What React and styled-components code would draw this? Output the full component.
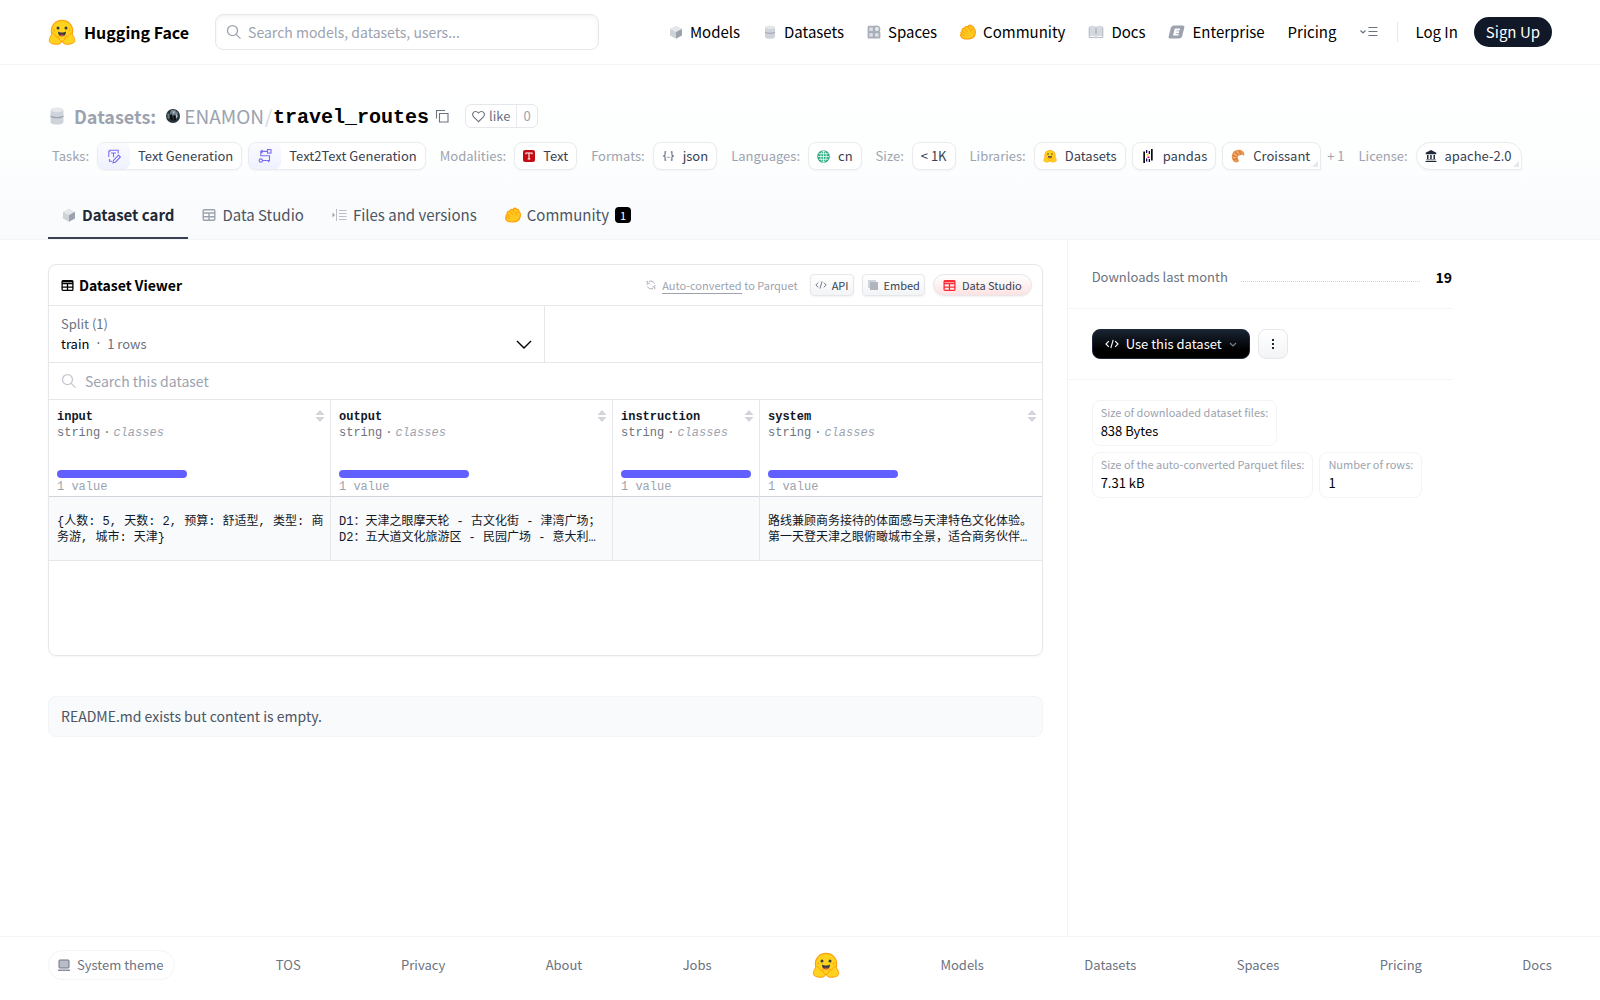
import React from 'react';
import styled, { createGlobalStyle } from 'styled-components';

const GlobalStyle = createGlobalStyle`
  * {
    box-sizing: border-box;
  }

  body {
    margin: 0;
    background: #fff;
    color: #000;
    font-family: 'Noto Sans CJK SC', 'Noto Sans', sans-serif;
    font-size: 14px;
    line-height: 24px;
  }

  button,
  input {
    margin: 0;
    font-family: inherit;
    cursor: pointer;
  }

  a {
    color: inherit;
    text-decoration: none;
  }

  svg {
    display: block;
    flex-shrink: 0;
  }

  h1,
  h2,
  p,
  dl,
  dd {
    margin: 0;
    padding: 0;
  }
`;

const Page = styled.div`
  display: flex;
  flex-direction: column;
  min-height: 100vh;
`;

const Header = styled.header`
  display: flex;
  align-items: center;
  height: 65px;
  padding: 0 48px;
  border-bottom: 1px solid #f3f4f6;
`;

const Brand = styled.a`
  display: flex;
  align-items: center;
  gap: 8px;
  margin-right: 26px;
  font-size: 16px;
  font-weight: 700;
  white-space: nowrap;
`;

const HeaderSearch = styled.label`
  display: flex;
  align-items: center;
  flex: 0 1 384px;
  height: 36px;
  padding: 0 10px;
  gap: 6px;
  border: 1px solid #e5e7eb;
  border-radius: 8px;
  color: #9ca3af;
  box-shadow: inset 0 2px 4px rgba(0, 0, 0, 0.05);
`;

const TextInput = styled.input`
  flex: 1;
  min-width: 0;
  padding: 0;
  border: 0;
  outline: 0;
  background: transparent;
  font-size: 14px;
  line-height: 24px;
  &::placeholder {
    color: #9ca3af;
    opacity: 1;
  }
`;

const MainNav = styled.nav`
  display: flex;
  align-items: center;
  gap: 23px;
  margin-left: auto;
  font-size: 15px;
`;

const NavLink = styled.a`
  display: flex;
  align-items: center;
  gap: 7px;
  white-space: nowrap;
`;

const MoreBtn = styled.button`
  display: flex;
  padding: 0;
  border: 0;
  background: none;
  color: #6b7280;
`;

const Divider = styled.div`
  width: 1px;
  height: 20px;
  margin: 0 17px 0 18px;
  background: #e5e7eb;
`;

const Account = styled.div`
  display: flex;
  align-items: center;
  gap: 16px;
  font-size: 15px;
  white-space: nowrap;
`;

const SignUp = styled.a`
  padding: 3px 12px;
  border-radius: 15px;
  background: #111827;
  color: #fff;
`;

const Hero = styled.section`
  padding: 36px 48px 0;
  border-bottom: 1px solid #f3f4f6;
  background: linear-gradient(to top, #f9fafc, #fdfefe 50%, #fff);
`;

const TitleRow = styled.div`
  display: flex;
  align-items: center;
  height: 30px;
  margin-bottom: 11px;
`;

const Title = styled.h1`
  display: flex;
  align-items: center;
  font-size: 18px;
  font-weight: 400;
  line-height: 28px;
  color: #9ca3af;
  white-space: nowrap;
`;

const TitleKind = styled.a`
  display: flex;
  align-items: center;
  gap: 8px;
  margin-right: 10px;
  font-weight: 700;
`;

const Owner = styled.a`
  display: flex;
  align-items: center;
  gap: 4px;
  font-size: 19px;
`;

const Slash = styled.span`
  margin: 0 1px;
  color: #d1d5db;
`;

const RepoName = styled.a`
  padding-top: 3px;
  color: #000;
  font-family: 'Liberation Mono', monospace;
  font-size: 20px;
  font-weight: 700;
`;

const CopyBtn = styled.button`
  display: flex;
  margin: 0 15px 0 5px;
  padding: 1px;
  border: 0;
  background: none;
  color: #6b7280;
`;

const LikeBox = styled.div`
  display: flex;
  border: 1px solid #e5e7eb;
  border-radius: 6px;
  background: #fff;
  color: #6b7280;
  font-size: 13px;
  line-height: 22px;
`;

const LikeBtn = styled.button`
  display: flex;
  align-items: center;
  gap: 4px;
  padding: 0 6px;
  border: 0;
  background: none;
  color: inherit;
  font-size: 13px;
  line-height: 22px;
`;

const LikeCount = styled.button`
  padding: 0 6px;
  border: 0;
  border-left: 1px solid #e5e7eb;
  background: none;
  color: #9ca3af;
  font-size: 13px;
  line-height: 22px;
`;

const TagRow = styled.div`
  display: flex;
  flex-wrap: wrap;
  align-items: center;
  gap: 8px 14px;
  padding-left: 4px;
`;

const TagGroup = styled.div`
  display: flex;
  align-items: center;
  gap: 6px;
  color: #9ca3af;
  font-size: 13px;
  line-height: 20px;
  white-space: nowrap;
`;

const TagLabel = styled.span`
  margin-right: 2px;
`;

const Tag = styled.a`
  position: relative;
  display: flex;
  align-items: center;
  gap: 8px;
  height: 28px;
  padding: 0 8px;
  overflow: hidden;
  border: 1px solid #e9ebee;
  border-radius: ${(p) => (p.$round ? '14px' : '8px')};
  ${(p) => p.$corner && 'border-bottom-right-radius: 0; padding-right: 10px;'}
  background: #fff;
  box-shadow: 0 1px 2px rgba(0, 0, 0, 0.04);
  color: #374151;
  &::after {
    content: '';
    display: ${(p) => (p.$corner ? 'block' : 'none')};
    position: absolute;
    right: 2px;
    bottom: 2px;
    border: 3px solid #e5e7eb;
    border-top-color: transparent;
    border-left-color: transparent;
  }
`;

const TaskIcon = styled.span`
  display: flex;
  align-items: center;
  height: 28px;
  margin-left: -8px;
  padding: 0 8px;
  border-radius: 0 8px 8px 0;
  background: linear-gradient(#fbfbff, #eef1ff);
  color: #7c6cf2;
`;

const Tabs = styled.nav`
  display: flex;
  margin-top: 21px;
`;

const Tab = styled.a`
  display: flex;
  align-items: center;
  gap: 6px;
  height: 48px;
  padding: 2px 14px 0;
  border-bottom: 2px solid ${(p) => (p.$active ? '#374151' : 'transparent')};
  color: ${(p) => (p.$active ? '#1f2937' : '#4b5563')};
  font-size: 15px;
  font-weight: ${(p) => (p.$active ? 700 : 400)};
  white-space: nowrap;
`;

const Count = styled.span`
  width: 16px;
  height: 16px;
  border-radius: 4px;
  background: #000;
  color: #fff;
  font-size: 11px;
  line-height: 16px;
  text-align: center;
`;

const Body = styled.div`
  display: grid;
  grid-template-columns: 2fr 1fr;
  flex: 1;
`;

const MainColumn = styled.main`
  min-width: 0;
  padding: 24px 24px 48px 48px;
`;

const Sidebar = styled.aside`
  min-width: 0;
  padding-right: 148px;
  border-left: 1px solid #f3f4f6;
`;

const Viewer = styled.section`
  min-height: 392px;
  border: 1px solid #e5e7eb;
  border-radius: 8px;
  box-shadow: 0 1px 2px rgba(0, 0, 0, 0.04);
`;

const ViewerHead = styled.div`
  display: flex;
  align-items: center;
  height: 41px;
  padding: 0 10px 0 12px;
  border-bottom: 1px solid #e5e7eb;
`;

const ViewerTitle = styled.h2`
  display: flex;
  align-items: center;
  gap: 5px;
  font-size: 14px;
  font-weight: 700;
  white-space: nowrap;
`;

const ViewerTools = styled.div`
  display: flex;
  align-items: center;
  gap: 8px;
  margin-left: auto;
  font-size: 11px;
  line-height: 16px;
`;

const Converted = styled.p`
  display: flex;
  align-items: center;
  gap: 6px;
  margin-right: 4px;
  color: #9ca3af;
  white-space: nowrap;
  a {
    border-bottom: 1px solid #9ca3af;
  }
`;

const SmallBtn = styled.button`
  display: flex;
  align-items: center;
  gap: 5px;
  height: 22px;
  padding: 0 4px;
  border: 1px solid #e5e7eb;
  border-radius: 4px;
  background: linear-gradient(#fff, #f3f4f6);
  box-shadow: 0 1px 2px rgba(0, 0, 0, 0.05);
  color: #374151;
  font-size: 11px;
  line-height: 16px;
  white-space: nowrap;
  svg {
    color: #6b7280;
  }
`;

const StudioBtn = styled(SmallBtn)`
  gap: 6px;
  padding: 0 9px;
  border-radius: 11px;
  background: linear-gradient(#fff, #fee2e2);
  svg {
    color: #fb2c36;
  }
`;

const SplitRow = styled.div`
  display: grid;
  grid-template-columns: 1fr 1fr;
  height: 57px;
  border-bottom: 1px solid #e5e7eb;
`;

const SplitBtn = styled.button`
  display: flex;
  align-items: flex-end;
  justify-content: space-between;
  padding: 8px 12px;
  border: 0;
  border-right: 1px solid #e5e7eb;
  background: none;
  color: #000;
  font-size: 13px;
  line-height: 20px;
  text-align: left;
`;

const SplitName = styled.span`
  display: flex;
  gap: 5px;
`;

const Muted = styled.span`
  color: #6b7280;
`;

const Dot = styled.span`
  color: #6b7280;
  font-family: 'Liberation Mono', monospace;
`;

const ViewerSearch = styled.label`
  display: flex;
  align-items: center;
  gap: 8px;
  height: 37px;
  padding: 0 12px;
  border-bottom: 1px solid #e5e7eb;
  color: #c4c8cf;
`;

const Table = styled.table`
  width: 100%;
  border-spacing: 0;
  table-layout: fixed;
  font-family: 'Liberation Mono', 'Noto Sans CJK SC', monospace;
  font-size: 12px;
  line-height: 16px;
`;

const HeadCell = styled.th`
  height: 97px;
  padding: 9px 8px 0;
  border-left: 1px solid #e5e7eb;
  border-bottom: 1px solid #d1d5db;
  font-weight: 400;
  text-align: left;
  vertical-align: top;
  color: #6b7280;
  &:first-child {
    border-left: 0;
  }
`;

const HeadTop = styled.div`
  display: flex;
  justify-content: space-between;
  margin-right: -3px;
  color: #111827;
  font-weight: 700;
`;

const TypeLine = styled.div`
  display: flex;
  gap: 3px;
  i {
    color: #9ca3af;
  }
`;

const Bar = styled.div`
  max-width: 130px;
  height: 8px;
  margin: 29px 0 1px;
  border-radius: 4px;
  background: #615fff;
`;

const ValueNote = styled.div`
  color: #9ca3af;
`;

const Cell = styled.td`
  height: 64px;
  padding: 2px 6px 0 8px;
  border-left: 1px solid #e5e7eb;
  border-bottom: 1px solid #e5e7eb;
  background: #f9fafb;
  color: #111827;
  vertical-align: middle;
  white-space: pre-line;
  &:first-child {
    border-left: 0;
  }
`;

const EmptyReadme = styled.div`
  height: 41px;
  margin-top: 40px;
  padding: 7px 12px;
  border: 1px solid #f3f4f6;
  border-radius: 8px;
  background: #f9fafb;
  color: #4b5563;
  line-height: 25px;
`;

const SideBlock = styled.div`
  display: flex;
  flex-wrap: wrap;
  align-items: center;
  gap: ${(p) => p.$gap || '8px'};
  padding: 20px 0 20px 24px;
  ${(p) => p.$line && 'border-bottom: 1px solid #f3f4f6;'}
`;

const Downloads = styled.dl`
  display: flex;
  align-items: center;
  width: 100%;
  height: 28px;
  padding-top: 6px;
  dt {
    color: #6b7280;
    font-size: 13px;
  }
  dd {
    font-size: 14px;
    font-weight: 700;
  }
`;

const Dots = styled.div`
  flex: 1;
  height: 10px;
  margin: 0 15px 0 13px;
  border-bottom: 1px dotted #d1d5db;
`;

const UseBtn = styled.button`
  display: flex;
  align-items: center;
  gap: 7px;
  height: 30px;
  padding: 0 12px 1px;
  border: 1px solid #1e293b;
  border-radius: 8px;
  background: linear-gradient(#1a2433, #000 70%);
  color: #fff;
  font-size: 13px;
  white-space: nowrap;
`;

const DotsBtn = styled.button`
  display: flex;
  align-items: center;
  justify-content: center;
  width: 30px;
  height: 30px;
  padding: 0;
  border: 1px solid #e5e7eb;
  border-radius: 8px;
  background: linear-gradient(#fff, #f3f4f6);
`;

const Fact = styled.div`
  padding: 3px 8px 4px;
  border: 1px solid #f3f4f6;
  border-radius: 8px;
  white-space: nowrap;
  dt {
    color: #9ca3af;
    font-size: 11px;
    line-height: 17px;
  }
  dd {
    font-size: 13px;
    line-height: 20px;
  }
`;

const Footer = styled.footer`
  display: flex;
  align-items: center;
  justify-content: space-between;
  height: 64px;
  padding: 0 48px 8px;
  border-top: 1px solid #f3f4f6;
  color: #6b7280;
  font-size: 13px;
  line-height: 20px;
`;

const ThemeBtn = styled.button`
  display: flex;
  align-items: center;
  gap: 6px;
  height: 30px;
  padding: 0 11px 0 8px;
  border: 1px solid #f3f4f6;
  border-radius: 15px;
  background: none;
  color: inherit;
  font-size: 13px;
`;

const Face = ({ size = 28 }) => (
  <svg width={size} height={size} viewBox="0 0 28 28">
    <circle cx="14" cy="13" r="11.200" fill="#ff9d0b" />
    <circle cx="14" cy="13" r="10.200" fill="#ffd21e" />
    <g fill="#ffd21e" stroke="#ff9d0b" strokeWidth="1" strokeLinejoin="round">
      <path d="M13.200 24.500c-1.200 2-4.500 2-7.300 1.500-3-.5-5-1.800-4.600-3.400.1-.6.5-.8.5-.8-.8-.9-.4-2.100.5-2.300-.3-1.200.3-2 1.300-1.900-.4-1.800.7-2.800 1.900-2 1.700 1.200 2.500 2.800 3.200 3.900.6-1.300 2-2 2.300-.7.2.8-.4 1.500-.1 2.200 1.500.8 2.700 2 2.300 3.500z" />
      <path d="M14.800 24.500c1.200 2 4.500 2 7.300 1.500 3-.5 5-1.800 4.600-3.400-.1-.6-.5-.8-.5-.8.8-.9.4-2.100-.5-2.300.3-1.200-.3-2-1.300-1.900.4-1.800-.7-2.800-1.900-2-1.700 1.200-2.500 2.800-3.200 3.900-.6-1.300-2-2-2.300-.7-.2.8.4 1.500.1 2.200-1.500.8-2.700 2-2.300 3.500z" />
    </g>
    <circle cx="10" cy="10" r="1.500" fill="#3a3b45" />
    <circle cx="18" cy="10" r="1.500" fill="#3a3b45" />
    <circle cx="6.300" cy="12.500" r="1" fill="#ffa51e" />
    <circle cx="21.700" cy="12.500" r="1" fill="#ffa51e" />
    <path d="M10.200 13.400c1.200.8 2.400 1.100 3.800 1.100s2.600-.3 3.800-1.100c.5 2.800-1.300 4.900-3.800 4.900s-4.300-2.100-3.800-4.900z" fill="#3a3b45" />
    <path d="M12 17.300c.5-1.200 1.500-.9 2-.4.500-.5 1.500-.8 2 .4-.5.700-1.200 1-2 1s-1.500-.3-2-1z" fill="#ef4e4e" />
  </svg>
);

const Clap = () => (
  <svg width="16" height="16" viewBox="0 0 16 16">
    <path
      d="M2.300 5.600c.2-1.200 1.600-1.700 2.300-1.200C5 2.500 6.800 2 7.800 2.900 8.900.7 11 .6 11.700 2.300c1.600-.4 2.400.9 2.200 2.200 1.500 1 1.700 3.500 1.200 5.500-.8 3.500-4 5-7.500 5C4 15.200.8 13.700.6 11.500c-.1-.8.2-1.300.7-1.600-.8-1.300 0-2.200.8-2.400-.1-.8-.1-1.300.2-1.900z"
      fill="#ffc81e"
      stroke="#ff9d0b"
      strokeWidth="1.100"
    />
    <path d="M4.600 4.500l3.200 3.100M7.600 3l3 3.300M2.200 7.500l3.200 2.100M12.900 5c-1.700.3-2.300 1.400-1.900 2.900M1.400 10l2.800 1.500" fill="none" stroke="#ff9d0b" strokeWidth=".9" strokeLinecap="round" />
  </svg>
);

const Cube = () => (
  <svg width="14" height="14" viewBox="0 0 14 14">
    <path d="M7 .6l6 3.200L7 7.100 1 3.800z" fill="#e5e7eb" />
    <path d="M1 3.800l6 3.300v6.600l-6-3.300z" fill="#ced2d9" />
    <path d="M13 3.800L7 7.100v6.600l6-3.300z" fill="#9ca3af" />
  </svg>
);

const Cylinder = ({ size = 14 }) => (
  <svg width={size} height={size} viewBox="0 0 14 14">
    <path d="M2 2.300v9.600c0 1 2.200 1.800 5 1.800s5-.8 5-1.800V2.300z" fill="#cfd3da" />
    <path d="M2 6.500c.8 1 2.600 1.300 5 1.300s4.200-.3 5-1.300v1C11.200 8.400 9.400 8.800 7 8.800S2.800 8.400 2 7.500z" fill="#9ca3af" />
    <ellipse cx="7" cy="2.200" rx="5" ry="1.800" fill="#e5e7eb" />
  </svg>
);

const SpacesIcon = () => (
  <svg width="14" height="14" viewBox="0 0 14 14">
    <path d="M2 .8h5.200C9 0 13.400 0 13.400 4c0 1.300-.4 2-.7 2.600.4.300.7.700.7 1.400v4c0 1-.6 1.600-1.600 1.600H2C1 13.600.6 13 .6 12V2.400C.6 1.400 1 .8 2 .8z" fill="#a9afba" />
    <rect x="2.400" y="2.500" width="3.400" height="3.400" fill="#dfe2e7" />
    <rect x="2.400" y="8.200" width="3.400" height="3.400" fill="#dfe2e7" />
    <rect x="8.100" y="8.200" width="3.400" height="3.400" fill="#dfe2e7" />
    <circle cx="9.900" cy="4.100" r="2" fill="#e9ebee" />
  </svg>
);

const Book = () => (
  <svg width="16" height="14" viewBox="0 0 16 14">
    <path d="M1 1.500c2.500-1 5-1 7 .2C10 .5 12.500.5 15 1.500v10c-2.500-.7-5-.5-7 .5-2-1-4.500-1.200-7-.5z" fill="#d5d8de" />
    <path d="M1.200 2.500v10H6.500l1.500.5 1.500-.5h5.300v-10" fill="none" stroke="#b4b9c3" />
    <path d="M8 3v6" stroke="#9ca3af" />
  </svg>
);

const EnterpriseIcon = () => (
  <svg width="17" height="14" viewBox="0 0 17 14">
    <path d="M6 .5h8.500c1.500 0 2.200.9 1.800 2.300L14.200 11c-.4 1.500-1.600 2.500-3.200 2.500H2.500C1 13.500.3 12.600.7 11.200L2.800 3C3.200 1.500 4.400.5 6 .5z" fill="#9ca3af" />
    <path d="M6.800 3.500h5.300l-.5 1.900H8.500l-.2.800h2.900l-.4 1.700H7.900l-.2.800h3.200l-.5 1.900H5z" fill="#fff" />
  </svg>
);

const MenuIcon = () => (
  <svg width="20" height="14" viewBox="0 0 20 14" fill="none" stroke="currentColor" strokeWidth="1.200">
    <path d="M1.500 5.500L4 8l2.500-2.500M9.500 2.500h9M9.500 6.500h9M9.500 10.500h9" />
  </svg>
);

const SearchIcon = ({ size = 16 }) => (
  <svg width={size} height={size} viewBox="0 0 16 16" fill="none" stroke="currentColor" strokeWidth="1.300">
    <circle cx="6.500" cy="6.600" r="5" />
    <path d="M10.100 10.400l4.400 4.200" />
  </svg>
);

const GridIcon = ({ size = 14, color = 'currentColor', header }) => (
  <svg width={size} height={size} viewBox="0 0 14 14" fill="none" stroke={color} strokeWidth="1.400">
    <rect x="1.200" y="1.700" width="11.600" height="10.600" rx="1" />
    <path d="M1 5h12M1 8.700h12M7 4.500v8" />
    {header && <path d="M1 2.700h12" strokeWidth="2" />}
  </svg>
);

const FilesIcon = () => (
  <svg width="15" height="14" viewBox="0 0 15 14" fill="none" stroke="#b9bec7">
    <path d="M4.500 1v12M7 2.500h7.500M7 5.500h7.500M7 8.500h7.500M7 11.500h7.500" />
    <path d="M.5 4.500L3 7 .5 9.500z" fill="#9ca3af" stroke="none" />
  </svg>
);

const CopyIcon = () => (
  <svg width="14" height="14" viewBox="0 0 14 14" fill="none" stroke="currentColor" strokeWidth="1.100">
    <path d="M4.500 4.500h8.500v8.500H4.500z" />
    <path d="M1.500 9.500v-8h8.500" />
  </svg>
);

const Heart = () => (
  <svg width="13" height="13" viewBox="0 0 13 13" fill="none" stroke="currentColor" strokeWidth="1.100">
    <path d="M6.500 11.700L1.600 6.800C-.4 4.500 1 1.500 3.700 1.500c1.300 0 2.100.7 2.800 1.500.7-.8 1.500-1.500 2.800-1.500 2.700 0 4.100 3 2.100 5.300z" />
  </svg>
);

const Avatar = () => (
  <svg width="14" height="14" viewBox="0 0 14 14">
    <circle cx="7" cy="7" r="7" fill="#273138" />
    <path d="M5 1h4l3 3-1 3-3-1-3 2-1-4z" fill="#71828b" />
    <path d="M7 2l2 1-2 2zM10 5l2 2-2 3z" fill="#b5c2c9" />
    <path d="M1.500 4l2 1v5l-2-1z" fill="#6b7a81" />
    <path d="M4 6l2-1 1 7-3-2zM8 7l1-1 1 5-2 1z" fill="#0c1114" />
  </svg>
);

const TextGenIcon = () => (
  <svg width="16" height="16" viewBox="0 0 16 16" fill="none" stroke="currentColor" strokeWidth="1.100">
    <path d="M6 13.200H3.500V11M2.800 9V3.300h1V2.200h8.400v3.300M5 5h5M7.500 5v4.300" />
    <path d="M7.500 12.300l5-5.200 1.900 1.900-5 5.200-2.400.5z" />
  </svg>
);

const Text2TextIcon = () => (
  <svg width="16" height="16" viewBox="0 0 16 16" fill="none" stroke="currentColor" strokeWidth="1.100">
    <rect x="10.500" y="1.600" width="3.500" height="3.500" />
    <circle cx="3.800" cy="12.600" r="1.700" />
    <path d="M10.500 3.400H3.800v4.300h8.700v4.800H5.600M5.500 1.800L3.800 3.400l1.700 1.700M11 14l1.500-1.500" />
  </svg>
);

const TextModality = () => (
  <svg width="12" height="12" viewBox="0 0 12 12">
    <rect width="12" height="12" rx="2" fill="#c60c12" />
    <path d="M3 4.200V3h6v1.200M6 3v6M4.700 9h2.600" fill="none" stroke="#fff" strokeWidth="1.100" />
  </svg>
);

const Braces = () => (
  <svg width="13" height="12" viewBox="0 0 14 12" fill="none" stroke="#6b7280" strokeWidth="1.200">
    <path d="M4.500 1.500H3.300V5L1.800 6l1.500 1v3.500h1.200M9.500 1.500h1.200V5l1.500 1-1.500 1v3.500H9.500" />
    <path d="M5 7.500h1M6.500 7.500h1M8 7.500h1" stroke="#9ca3af" />
  </svg>
);

const Globe = () => (
  <svg width="13" height="13" viewBox="0 0 14 14" fill="none" stroke="#fff" strokeWidth=".8">
    <circle cx="7" cy="7" r="6.800" fill="#2fae84" stroke="none" />
    <ellipse cx="7" cy="7" rx="2.900" ry="6" />
    <path d="M7 1v12M1 7h12M2 4h10M2 10h10" />
  </svg>
);

const Pandas = () => (
  <svg width="14" height="16" viewBox="0 0 14 16">
    <path d="M5 2h1.300v3H5zM5 10.500h1.300v3H5zM7.700 3h1.300v3H7.700zM7.700 11h1.300v3H7.700z" fill="#150458" />
    <path d="M2.300 3.500H4v11.500H2.300zM10 1h1.700v11.500H10z" fill="#0b0b14" />
    <path d="M5.500 6h2v1.500h-2z" fill="#ffca00" />
    <path d="M6.500 8.500h2v1.500h-2z" fill="#e70488" />
  </svg>
);

const Croissant = () => (
  <svg width="14" height="14" viewBox="0 0 14 14">
    <path d="M3.500 13C.5 11 0 6.500 2 3.500 4 .5 9 0 11.800 2.200c1.600 1.400 1.800 3.200 1.200 4.800-1-1-2.500-1.500-3.500-.8C8 6 6.200 7.200 6.700 9c.4 1.500 1.300 1.600 1.200 2.700-.2 1.500-2.600 2.300-4.400 1.300z" fill="#e9954f" />
    <path d="M4 2.500l3.500 3.700M1.500 6.500l5 1.700M8.500 1.300l1 4.500M2 10.500l4.700-.8" fill="none" stroke="#c9683a" strokeWidth=".7" />
    <path d="M5.800 2.600l2 2M3 5l2.500 1.500M2.500 8.500h2.500" stroke="#f6c27c" />
  </svg>
);

const License = () => (
  <svg width="12" height="12" viewBox="0 0 12 12" fill="#1f2937">
    <path d="M6 0l5.300 2.700v1.500H.7V2.700zM2 5h1.500v4H2zM5.200 5h1.500v4H5.200zM8.500 5H10v4H8.500zM1.200 9.500h9.600v.8H1.200zM.5 11h11v1H.5z" />
  </svg>
);

const Refresh = () => (
  <svg width="10" height="10" viewBox="0 0 10 10" fill="none" stroke="#9ca3af" strokeWidth=".9">
    <path d="M3 1.400C5 .6 7.500 1.300 8.600 3.500M7 8.600C5 9.400 2.500 8.700 1.400 6.500M9 5v1M1 5V4" />
    <path d="M1.200.8v2.400h2.400M8.800 9.200V6.800H6.400" />
  </svg>
);

const CodeIcon = ({ size = 12 }) => (
  <svg width={size} height={size} viewBox="0 0 14 14" fill="none" stroke="currentColor" strokeWidth="1.100">
    <path d="M3.800 4.200L1 7l2.800 2.800M10.200 4.200L13 7l-2.800 2.800M8.200 2.800l-2.400 8.400" />
  </svg>
);

const EmbedIcon = () => (
  <svg width="12" height="12" viewBox="0 0 12 12">
    <path d="M1 1h8v2H3v6H1z" fill="#d1d5db" />
    <path d="M3 3h8v8H3z" fill="#b0b5be" />
  </svg>
);

const Chevron = () => (
  <svg width="16" height="16" viewBox="0 0 16 16" fill="none" stroke="#000" strokeWidth="1.400">
    <path d="M1 3l7 7 7-7" />
  </svg>
);

const SmallChevron = () => (
  <svg width="8" height="8" viewBox="0 0 8 8" fill="none" stroke="#7d8694" strokeWidth="1.100">
    <path d="M1 3l3 3 3-3" />
  </svg>
);

const SortIcon = () => (
  <svg width="10" height="14" viewBox="0 0 10 14" fill="#d1d5db">
    <path d="M5 1l4.500 5h-9zM5 13L.5 8h9z" />
  </svg>
);

const Laptop = () => (
  <svg width="14" height="12" viewBox="0 0 14 12">
    <rect x="2" y="1" width="10" height="8" rx=".8" fill="#b8bdc7" stroke="#6b7280" />
    <path d="M1 11.200h12" stroke="#6b7280" strokeWidth="1.200" />
  </svg>
);

const navItems = [
  { name: 'Models', icon: <Cube /> },
  { name: 'Datasets', icon: <Cylinder /> },
  { name: 'Spaces', icon: <SpacesIcon /> },
  { name: 'Community', icon: <Clap /> },
  { name: 'Docs', icon: <Book /> },
  { name: 'Enterprise', icon: <EnterpriseIcon /> },
  { name: 'Pricing' },
];

const tagGroups = [
  {
    label: 'Tasks:',
    tags: [
      { name: 'Text Generation', icon: <TextGenIcon />, task: true },
      { name: 'Text2Text Generation', icon: <Text2TextIcon />, task: true },
    ],
  },
  { label: 'Modalities:', tags: [{ name: 'Text', icon: <TextModality /> }] },
  { label: 'Formats:', tags: [{ name: 'json', icon: <Braces /> }] },
  { label: 'Languages:', tags: [{ name: 'cn', icon: <Globe /> }] },
  { label: 'Size:', tags: [{ name: '< 1K' }] },
  {
    label: 'Libraries:',
    tags: [
      { name: 'Datasets', icon: <Face size={14} /> },
      { name: 'pandas', icon: <Pandas /> },
      { name: 'Croissant', icon: <Croissant />, corner: true },
    ],
    more: '+ 1',
  },
  {
    label: 'License:',
    tags: [{ name: 'apache-2.0', icon: <License />, corner: true, round: true }],
  },
];

const columns = [
  { name: 'input', width: '281px', text: '{人数: 5, 天数: 2, 预算: 舒适型, 类型: 商务游, 城市: 天津}' },
  { name: 'output', width: '282px', text: 'D1：天津之眼摩天轮 - 古文化街 - 津湾广场；\nD2：五大道文化旅游区 - 民园广场 - 意大利…' },
  { name: 'instruction', width: '147px', text: '' },
  { name: 'system', text: '路线兼顾商务接待的体面感与天津特色文化体验。\n第一天登天津之眼俯瞰城市全景，适合商务伙伴…' },
];

const footerLeft = ['TOS', 'Privacy', 'About', 'Jobs'];
const footerRight = ['Models', 'Datasets', 'Spaces', 'Pricing', 'Docs'];

const App = () => {
  return (
    <Page>
      <GlobalStyle />
      <Header>
        <Brand href="#">
          <Face />
          Hugging Face
        </Brand>
        <HeaderSearch>
          <SearchIcon />
          <TextInput aria-label="Search" placeholder="Search models, datasets, users..." />
        </HeaderSearch>
        <MainNav>
          {navItems.map((el) => (
            <NavLink key={el.name} href="#">
              {el.icon}
              {el.name}
            </NavLink>
          ))}
          <MoreBtn aria-label="More">
            <MenuIcon />
          </MoreBtn>
        </MainNav>
        <Divider />
        <Account>
          <a href="#">Log In</a>
          <SignUp href="#">Sign Up</SignUp>
        </Account>
      </Header>

      <Hero>
        <TitleRow>
          <Title>
            <TitleKind href="#">
              <Cylinder size={18} />
              Datasets:
            </TitleKind>
            <Owner href="#">
              <Avatar />
              ENAMON
            </Owner>
            <Slash>/</Slash>
            <RepoName href="#">travel_routes</RepoName>
          </Title>
          <CopyBtn aria-label="Copy name">
            <CopyIcon />
          </CopyBtn>
          <LikeBox>
            <LikeBtn>
              <Heart />
              like
            </LikeBtn>
            <LikeCount>0</LikeCount>
          </LikeBox>
        </TitleRow>
        <TagRow>
          {tagGroups.map((group) => (
            <TagGroup key={group.label}>
              <TagLabel>{group.label}</TagLabel>
              {group.tags.map((tag) => (
                <Tag key={tag.name} href="#" $corner={tag.corner} $round={tag.round}>
                  {tag.task ? <TaskIcon>{tag.icon}</TaskIcon> : tag.icon}
                  {tag.name}
                </Tag>
              ))}
              {group.more}
            </TagGroup>
          ))}
        </TagRow>
        <Tabs>
          <Tab href="#" $active>
            <Cube />
            Dataset card
          </Tab>
          <Tab href="#">
            <GridIcon color="#9ca3af" />
            Data Studio
          </Tab>
          <Tab href="#">
            <FilesIcon />
            Files and versions
          </Tab>
          <Tab href="#">
            <Clap />
            Community
            <Count>1</Count>
          </Tab>
        </Tabs>
      </Hero>

      <Body>
        <MainColumn>
          <Viewer>
            <ViewerHead>
              <ViewerTitle>
                <GridIcon size={13} header />
                Dataset Viewer
              </ViewerTitle>
              <ViewerTools>
                <Converted>
                  <Refresh />
                  <span>
                    <a href="#">Auto-converted</a> to Parquet
                  </span>
                </Converted>
                <SmallBtn>
                  <CodeIcon />
                  API
                </SmallBtn>
                <SmallBtn>
                  <EmbedIcon />
                  Embed
                </SmallBtn>
                <StudioBtn>
                  <GridIcon size={13} header />
                  Data Studio
                </StudioBtn>
              </ViewerTools>
            </ViewerHead>
            <SplitRow>
              <SplitBtn>
                <span>
                  <Muted>Split (1)</Muted>
                  <SplitName>
                    train
                    <Dot>·</Dot>
                    <Muted>1 rows</Muted>
                  </SplitName>
                </span>
                <Chevron />
              </SplitBtn>
            </SplitRow>
            <ViewerSearch>
              <SearchIcon />
              <TextInput aria-label="Search this dataset" placeholder="Search this dataset" />
            </ViewerSearch>
            <Table>
              <colgroup>
                {columns.map((col) => (
                  <col key={col.name} width={col.width} />
                ))}
              </colgroup>
              <thead>
                <tr>
                  {columns.map((col) => (
                    <HeadCell key={col.name} scope="col">
                      <HeadTop>
                        {col.name}
                        <SortIcon />
                      </HeadTop>
                      <TypeLine>
                        <span>string</span>
                        <span>·</span>
                        <i>classes</i>
                      </TypeLine>
                      <Bar />
                      <ValueNote>1 value</ValueNote>
                    </HeadCell>
                  ))}
                </tr>
              </thead>
              <tbody>
                <tr>
                  {columns.map((col) => (
                    <Cell key={col.name}>{col.text}</Cell>
                  ))}
                </tr>
              </tbody>
            </Table>
          </Viewer>
          <EmptyReadme>README.md exists but content is empty.</EmptyReadme>
        </MainColumn>

        <Sidebar>
          <SideBlock $line>
            <Downloads>
              <dt>Downloads last month</dt>
              <Dots />
              <dd>19</dd>
            </Downloads>
          </SideBlock>
          <SideBlock $line>
            <UseBtn>
              <CodeIcon size={14} />
              Use this dataset
              <SmallChevron />
            </UseBtn>
            <DotsBtn aria-label="More actions">
              <svg width="4" height="12" viewBox="0 0 4 12" fill="#1f2937">
                <path d="M1 1h2v2H1zM1 5h2v2H1zM1 9h2v2H1z" />
              </svg>
            </DotsBtn>
          </SideBlock>
          <SideBlock as="dl" $gap="6px">
            <Fact>
              <dt>Size of downloaded dataset files:</dt>
              <dd>838 Bytes</dd>
            </Fact>
            <Fact>
              <dt>Size of the auto-converted Parquet files:</dt>
              <dd>7.31 kB</dd>
            </Fact>
            <Fact>
              <dt>Number of rows:</dt>
              <dd>1</dd>
            </Fact>
          </SideBlock>
        </Sidebar>
      </Body>

      <Footer>
        <ThemeBtn>
          <Laptop />
          System theme
        </ThemeBtn>
        {footerLeft.map((name) => (
          <a key={name} href="#">
            {name}
          </a>
        ))}
        <a href="#" aria-label="Home">
          <Face size={28} />
        </a>
        {footerRight.map((name) => (
          <a key={name} href="#">
            {name}
          </a>
        ))}
      </Footer>
    </Page>
  );
};

export default App;
